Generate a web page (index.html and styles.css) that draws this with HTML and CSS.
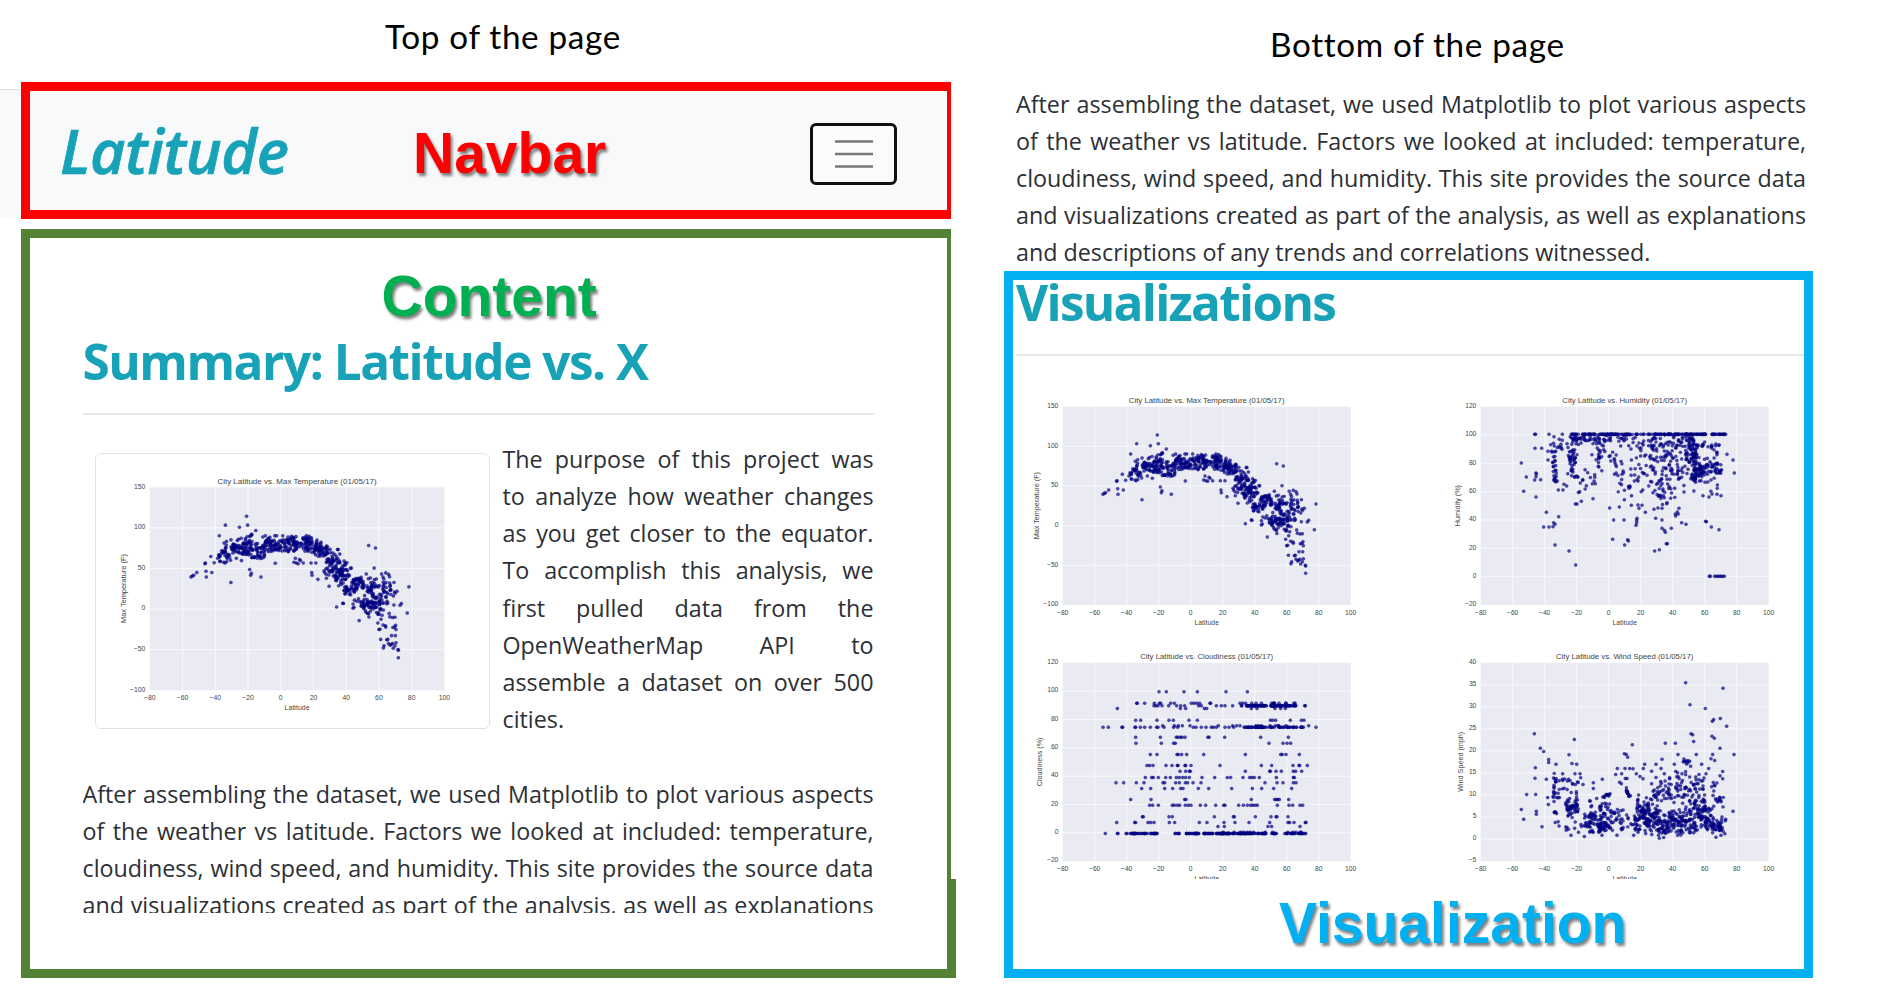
FILE: index.html
```html
<!DOCTYPE html>
<html lang="en">
<head>
<meta charset="utf-8">
<title>Latitude</title>
<link rel="stylesheet" href="styles.css">
</head>
<body>
<main class="board">
  <section class="column column-top">
    <h2 class="caption caption-top">Top of the page</h2>
    <div class="navrow">
      <div class="navedge"></div>
      <nav class="navbar">
        <a class="brand">Latitude</a>
        <strong class="label label-navbar">Navbar</strong>
        <button class="toggler" aria-label="Menu">
          <svg width="38" height="30" viewBox="0 0 38 30"><path d="M0 2.5H38M0 15H38M0 27.5H38" stroke="#777" stroke-width="2.4"/></svg>
        </button>
      </nav>
    </div>
    <div class="content">
      <strong class="label label-content">Content</strong>
      <h1 class="heading heading-summary">Summary: Latitude vs. X</h1>
      <hr class="rule">
      <div class="intro">
        <div class="card"><svg class="chart chart-card" data-chart="temp" viewBox="30 0 1080 780"></svg></div>
        <p class="text text-intro">
          <span>The purpose of this project was</span>
          <span>to analyze how weather changes</span>
          <span>as you get closer to the equator.</span>
          <span>To accomplish this analysis, we</span>
          <span>first pulled data from the</span>
          <span>OpenWeatherMap API to</span>
          <span>assemble a dataset on over 500</span>
          <span class="last">cities.</span>
        </p>
      </div>
      <p class="text text-cut">
        <span>After assembling the dataset, we used Matplotlib to plot various aspects</span>
        <span>of the weather vs latitude. Factors we looked at included: temperature,</span>
        <span>cloudiness, wind speed, and humidity. This site provides the source data</span>
        <span>and visualizations created as part of the analysis, as well as explanations</span>
      </p>
    </div>
  </section>
  <section class="column column-bottom">
    <h2 class="caption caption-bottom">Bottom of the page</h2>
    <p class="text text-bottom">
      <span>After assembling the dataset, we used Matplotlib to plot various aspects</span>
      <span>of the weather vs latitude. Factors we looked at included: temperature,</span>
      <span>cloudiness, wind speed, and humidity. This site provides the source data</span>
      <span>and visualizations created as part of the analysis, as well as explanations</span>
      <span class="last">and descriptions of any trends and correlations witnessed.</span>
    </p>
    <div class="visuals">
      <h1 class="heading heading-visuals">Visualizations</h1>
      <hr class="rule rule-visuals">
      <div class="grid">
        <svg class="chart" data-chart="temp" viewBox="30 0 1080 768"></svg>
        <svg class="chart" data-chart="humidity" viewBox="30 0 1080 768"></svg>
        <svg class="chart chart-cut" data-chart="cloud" viewBox="30 0 1080 728"></svg>
        <svg class="chart chart-cut" data-chart="wind" viewBox="30 0 1080 728"></svg>
      </div>
      <strong class="label label-visuals">Visualization</strong>
    </div>
  </section>
</main>
<script src="charts.js"></script>
</body>
</html>
```

FILE: styles.css
```css
* { box-sizing: border-box; }
body { margin: 0; width: 1884px; height: 996px; overflow: hidden; background: #fff; color: #2c3035; font-family: "Open Sans", "Noto Sans", sans-serif; }
h1, h2, p, hr { margin: 0; }
.board { display: flex; gap: 48px; height: 996px; }
.column-top { width: 956px; }
.column-bottom { width: 809px; }
.caption { font: 400 33.3px/40px Lato, sans-serif; letter-spacing: .65px; font-variant-ligatures: none; color: #000; white-space: nowrap; }
.caption-top { height: 82px; padding: 16px 0 0 385px; }
.caption-bottom { height: 85px; padding: 24px 0 0 266px; }

.navrow { display: flex; height: 137px; width: 951px; }
.navedge { width: 21px; height: 129px; margin-top: 7px; background: #f8f9fa; border-top: 1px solid #dfe1e3; }
.navbar { display: flex; align-items: flex-start; flex: 1; background: #f8f9fa; border: 9px solid #f00; border-right-width: 4px; }
.brand { width: 354px; padding: 22px 0 0 30px; font-size: 61px; line-height: 76px; font-style: italic; font-weight: 600; letter-spacing: -.4px; -webkit-text-stroke: .7px #17a2b8; color: #17a2b8; white-space: nowrap; }
.label { display: block; font: 700 57px/60px "Liberation Sans", Arial, sans-serif; white-space: nowrap; text-shadow: 2px 3px 3px rgba(0, 0, 0, .5); }
.label-navbar { width: 396px; padding: 32px 0 0 29px; color: #f00; }
.toggler { display: grid; place-items: center; width: 87px; height: 62px; margin: 32px 0 0 30px; padding: 0; background: #fafbfc; border: 3px solid #111; border-radius: 6px; }

.content { position: relative; width: 930px; height: 749px; margin: 10px 0 0 21px; padding: 28px 0 0 52.5px; border: 9px solid #548235; border-right-width: 4px; }
.content::after { content: ""; position: absolute; right: -9px; bottom: -9px; width: 6px; height: 99px; background: #548235; }
.label-content { padding-left: 299px; color: #00b050; }
.heading { font-size: 49.5px; line-height: 60px; font-weight: 700; letter-spacing: -1.48px; color: #17a2b8; white-space: nowrap; }
.heading-summary { margin-top: 5px; }
.rule { width: 791px; height: 2px; margin-top: 22px; border: 0; background: #e6e7e8; }
.intro { display: flex; margin-top: 26px; height: 298px; }
.card { width: 395px; height: 276px; margin: 12px 13px 0 12px; padding: 6px 0 0 10px; border: 1.5px solid #dee2e6; border-radius: 6px; }
.text { font-size: 23.3px; line-height: 37.15px; }
.text span { display: block; text-align: justify; text-align-last: justify; white-space: nowrap; }
.text .last { text-align-last: left; }
.text-intro { width: 371px; }
.text-cut { width: 791px; height: 137px; margin-top: 37px; overflow: hidden; }
.text-bottom { width: 790px; height: 186px; margin-left: 12px; padding-top: .6px; }

.visuals { height: 707px; padding-left: 3px; border: 9px solid #00b0f0; }
.heading-visuals { height: 75px; margin-top: -8px; letter-spacing: -1.7px; }
.rule-visuals { width: 788px; margin-top: 7px; }
.grid { display: grid; grid-template-columns: 360px 360px; column-gap: 58px; height: 499px; margin: 24px 0 0 4px; }
.label-visuals { margin-top: 14px; padding-left: 263px; color: #00b0f0; }
.chart { display: block; width: 360px; height: 256px; font-family: "Liberation Sans", Arial, sans-serif; font-size: 20px; fill: #444; }
.chart-card { width: 368.5px; height: 266px; }
.chart-cut { height: 243px; }
.plot { fill: #eaeaf2; }
.gridline { stroke: #f8f8fb; stroke-width: 3; }
.dot { fill: #00008b; fill-opacity: .7; stroke: #000030; stroke-opacity: .25; stroke-width: 1; }
```

FILE: charts.js
```js
const NS = "http://www.w3.org/2000/svg";
const LEFT = 158, RIGHT = 1022, TOP = 80, BOTTOM = 675;

function rng(seed) {
  return () => {
    seed = (seed + 0x6D2B79F5) | 0;
    let t = Math.imul(seed ^ (seed >>> 15), 1 | seed);
    t = (t + Math.imul(t ^ (t >>> 7), 61 | t)) ^ t;
    return ((t ^ (t >>> 14)) >>> 0) / 4294967296;
  };
}

function pairs(text) {
  return text.trim().split(/\s+/).map(p => p.split(",").map(Number));
}

// Dots scattered around a line from (x0,y0) to (x1,y1).
function band(rand, x0, y0, x1, y1, spread, count) {
  const out = [];
  for (let i = 0; i < count; i++) {
    const t = rand();
    const n = rand() + rand() - 1;
    out.push([x0 + (x1 - x0) * t + (rand() - .5) * 12, y0 + (y1 - y0) * t + n * spread]);
  }
  return out;
}

function tempPoints() {
  const r = rng(7);
  return pairs(`442,165 380,191 421,197 445,191 469,207 362,222 337,283 320,304 321,302 323,326 324,343
    340,330 296,330 287,338 279,343 283,340 396,359 484,343 451,321 456,332 454,338 526,303 347,301 357,288
    800,251 820,258 816,317 749,317 918,372 913,449 896,421 892,426 887,580 887,558 886,556 772,471 706,431
    724,420 726,421 684,370 651,350 633,330 634,338 676,347 793,334 805,346 858,335 861,342 842,343 850,331
    835,526 843,551 845,545 867,515 878,515 853,527 858,538 866,541 872,552 880,536 877,545 863,543 870,538
    850,490 849,486 830,497 833,496 880,497 871,491 879,485 827,478 876,490 581,300 588,302 593,304 608,302
    585,288 597,292 600,295 631,302 645,302 548,222 497,222 395,294 412,288 427,295 375,300 754,435 757,432
    870,462 860,450 862,460 877,461 839,455 836,467 842,484 856,526 874,425 669,325 671,330 675,335`)
    .concat(
      band(r, 360, 283, 390, 262, 34, 30), band(r, 390, 262, 460, 244, 30, 66),
      band(r, 430, 272, 500, 278, 18, 30), band(r, 465, 262, 500, 252, 38, 24),
      band(r, 490, 245, 650, 247, 28, 150), band(r, 620, 244, 685, 280, 28, 60),
      band(r, 675, 290, 730, 350, 42, 74), band(r, 705, 300, 745, 350, 52, 36),
      band(r, 728, 382, 765, 370, 22, 28), band(r, 755, 352, 820, 374, 24, 58),
      band(r, 780, 430, 840, 432, 42, 58), band(r, 820, 370, 885, 385, 40, 34),
      band(r, 750, 405, 860, 420, 35, 28));
}

function humidityPoints() {
  const r = rng(23);
  const fixed = pairs(`315,163 318,163 358,163 398,163 373,170 275,249 290,291 282,334 319,351 350,397 387,410
    342,441 358,441 370,440 372,428 376,433 376,495 418,513 438,555 437,372 442,372 455,364 490,356 316,205
    336,205 319,279 315,300 319,290 333,299 320,282 355,240 355,214 366,214 378,214 374,198 386,330 400,330
    411,318 403,313 540,384 569,381 552,420 583,420 584,359 605,376 549,478 594,479 596,483 585,495 619,436
    621,428 621,421 622,415 625,375 628,385 637,376 647,397 675,513 689,509 710,491 713,491 697,445 704,451
    707,457 725,445 697,385 673,388 678,415 697,420 712,368 723,355 737,402 743,396 748,385 738,408 746,402
    756,428 769,433 828,424 830,425 845,441 868,449 892,223 910,240 914,279 820,347 838,351 847,342 862,343
    874,347 839,589 842,589 855,589 860,589 865,589 870,589 874,589 879,589 884,589`);
  const row = [];
  for (let i = 0; i < 140; i++) row.push([420 + Math.pow(r(), .85) * 470, 163]);
  return fixed.concat(row,
    band(r, 368, 190, 378, 310, 10, 26), band(r, 415, 230, 440, 260, 65, 42),
    band(r, 425, 175, 540, 178, 20, 60), band(r, 385, 185, 395, 200, 20, 8),
    band(r, 445, 310, 500, 290, 35, 16), band(r, 470, 225, 560, 235, 55, 28),
    band(r, 565, 175, 650, 200, 40, 32), band(r, 555, 270, 660, 290, 75, 40),
    band(r, 660, 190, 760, 200, 50, 54), band(r, 670, 270, 760, 290, 85, 58),
    band(r, 665, 345, 740, 360, 40, 18), band(r, 760, 175, 800, 215, 50, 36),
    band(r, 770, 225, 800, 228, 24, 30), band(r, 780, 196, 865, 200, 12, 20),
    band(r, 785, 270, 820, 280, 36, 38), band(r, 810, 264, 875, 260, 18, 34),
    band(r, 760, 285, 870, 285, 70, 40), band(r, 640, 250, 870, 250, 100, 34)
  ).map(([x, y]) => [x + 5, Math.max(y, 163)]);
}

function cloudPoints() {
  const r = rng(41);
  const rows = {
    167: "447 469 522 562 648 712",
    201: "380 382 404 433 448 452 482 493 544 552 560 569 600 602 690 698 785 790 852 855",
    209: "432 438 444 456 476 500 512 524 566 574 619 634 645 668 884 886",
    217: "322 511 527 583 590 724 741 795 812 826",
    252: "377 392 441 477 490 537 562 781 788 797 841 874 882",
    273: "279 295 336 338 375 377 391 404 421 440 444 462 491 503 550 558 574 588 604 610 619 645 657 671 880 918",
    269: "458 493 505 517 540 625 668 680 690 780 805 828 896",
    303: "377 451 499 504 511 516 525 594 597 644 752 835",
    321: "378 454 491 496 777 819 831 842",
    355: "421 441 501 505 515 530 581 706 812 817 828 868",
    388: "411 419 429 468 486 502 504 525 527 543 630 754 785 849 867 869 892",
    405: "510 527 538 541 706 779 781 798 814 850 857 875",
    424: "406 425 430 445 467 481 499 508 518 527 538 576 614 652 662 699 719 726 733 748 799 850 853",
    440: "318 341 379 402 459 464 497 508 526 533 549 573 765 801 819 850 858",
    457: "395 422 464 488 512 519 565 596 665 727 755 791 845",
    490: "362 423 524 528 724 794 799 803 808 836",
    507: "419 428 445 487 493 502 509 526 535 543 571 587 617 641 645 686 700 712 722 728 735 742 802 837 848 870 878",
    542: "397 400 477 487 613 670 673 736 783 798 801 834",
    559: "320 374 377 414 422 432 478 494 568 591 642 675 717 779 834 839 852 886 888",
    571: "624 643 774 785 870"
  };
  const out = [[286, 592], [322, 592], [324, 592]];
  for (const y in rows) rows[y].split(" ").forEach(x => out.push([+x, +y]));
  const fill = (y, a, b, n, j) => { for (let i = 0; i < n; i++) out.push([a + r() * (b - a), y + (r() < .15 ? j : 0)]); };
  fill(592, 345, 450, 36, 0); fill(592, 490, 508, 5, 0); fill(592, 528, 640, 48, 0);
  fill(592, 635, 770, 80, -4); fill(592, 783, 800, 9, -4); fill(592, 820, 888, 26, -4);
  fill(209, 690, 830, 66, -8); fill(209, 780, 795, 12, -8); fill(209, 830, 862, 12, 0);
  fill(273, 695, 880, 54, -4); fill(273, 745, 760, 9, 0);
  return out;
}

function windPoints() {
  const r = rng(88);
  const fixed = pairs(`768,140 880,156 781,206 827,217 848,255 852,250 872,247 891,270 314,293 434,310 332,336
    342,346 357,370 357,379 379,384 418,356 317,395 316,426 350,429 291,475 318,475 275,520 282,549 320,525
    320,534 337,572 427,382 441,384 608,326 584,353 590,355 594,363 707,321 737,321 784,293 789,296 792,316
    847,300 854,306 871,336 913,355 849,355 844,368 855,373 800,355 745,355 697,369 761,377 780,375 783,390
    816,384 837,397 879,406 879,428 871,419 734,384 679,384 694,397 645,384 641,397 620,413 631,421 640,428
    586,397 600,397 610,398 558,415 563,397 576,413 587,427 592,427 570,438 575,443 518,429 491,440 491,457
    451,413 453,425 460,445 436,413 417,429 398,429 910,525 887,554 874,597 859,603 689,606 702,604 690,578
    464,601 424,597 562,597 612,597 517,597 744,597 354,484 356,505 704,413 757,413 666,405 808,415 829,413
    666,443 720,428 693,436 679,424`);
  return fixed.concat(
    band(r, 374, 410, 376, 550, 22, 24), band(r, 380, 440, 455, 470, 45, 24),
    band(r, 410, 515, 445, 515, 34, 42), band(r, 385, 572, 460, 570, 22, 12),
    band(r, 470, 560, 545, 560, 38, 84), band(r, 480, 522, 550, 525, 34, 32),
    band(r, 495, 478, 560, 478, 10, 12), band(r, 590, 465, 600, 480, 18, 12),
    band(r, 550, 548, 610, 550, 42, 28), band(r, 615, 550, 655, 540, 52, 64),
    band(r, 620, 505, 680, 505, 34, 24), band(r, 650, 558, 755, 558, 46, 135),
    band(r, 670, 480, 750, 470, 65, 46), band(r, 740, 440, 830, 470, 65, 62),
    band(r, 765, 378, 785, 380, 12, 7), band(r, 750, 558, 840, 552, 48, 92),
    band(r, 780, 520, 850, 520, 36, 34), band(r, 830, 572, 883, 568, 26, 52),
    band(r, 845, 460, 878, 510, 55, 20)).map(([x, y]) => [x + 5, y]);
}

const charts = {
  temp: { title: "Max Temperature", width: 467, label: "Max Temperature (F)", labelX: 87, labelY: 377, labelW: 202, ticks: ["150", "100", "50", "0", "−50", "−100"], points: tempPoints },
  humidity: { title: "Humidity", width: 374, label: "Humidity (%)", labelX: 96, labelY: 377, labelW: 124, ticks: ["120", "100", "80", "60", "40", "20", "0", "−20"], points: humidityPoints },
  cloud: { title: "Cloudiness", width: 399, label: "Cloudiness (%)", labelX: 96, labelY: 377, labelW: 146, ticks: ["120", "100", "80", "60", "40", "20", "0", "−20"], points: cloudPoints },
  wind: { title: "Wind Speed", width: 412, label: "Wind Speed (mph)", labelX: 105, labelY: 377, labelW: 180, ticks: ["40", "35", "30", "25", "20", "15", "10", "5", "0", "−5"], points: windPoints }
};

function add(svg, tag, attrs, text) {
  const el = document.createElementNS(NS, tag);
  for (const k in attrs) el.setAttribute(k, attrs[k]);
  if (text) el.textContent = text;
  svg.appendChild(el);
}

document.querySelectorAll("[data-chart]").forEach(svg => {
  const c = charts[svg.dataset.chart];
  add(svg, "rect", { class: "plot", x: LEFT, y: TOP, width: RIGHT - LEFT, height: BOTTOM - TOP });
  for (let i = 0; i < 10; i++) {
    const x = LEFT + i * 96;
    if (i && i < 9) add(svg, "path", { class: "gridline", d: `M${x} ${TOP}V${BOTTOM}` });
    add(svg, "text", { x, y: 704, "text-anchor": "middle" }, String(i * 20 - 80).replace("-", "−"));
  }
  c.ticks.forEach((t, i) => {
    const last = c.ticks.length - 1;
    const y = TOP + (BOTTOM - TOP) * i / last;
    if (i && i < last) add(svg, "path", { class: "gridline", d: `M${LEFT} ${y}H${RIGHT}` });
    add(svg, "text", { x: 145, y: y + 4, "text-anchor": "end" }, t);
  });
  c.points().forEach(([x, y]) => add(svg, "circle", { class: "dot", cx: x.toFixed(1), cy: y.toFixed(1), r: 5.2 }));
  add(svg, "text", { x: 590, y: 69, "text-anchor": "middle", "font-size": 22, textLength: c.width, lengthAdjust: "spacingAndGlyphs" }, `City Latitude vs. ${c.title} (01/05/17)`);
  add(svg, "text", { x: 590, y: 734, "text-anchor": "middle", textLength: 73 }, "Latitude");
  add(svg, "text", { transform: `translate(${c.labelX} ${c.labelY}) rotate(-90)`, "text-anchor": "middle", textLength: c.labelW, lengthAdjust: "spacingAndGlyphs" }, c.label);
});
```
